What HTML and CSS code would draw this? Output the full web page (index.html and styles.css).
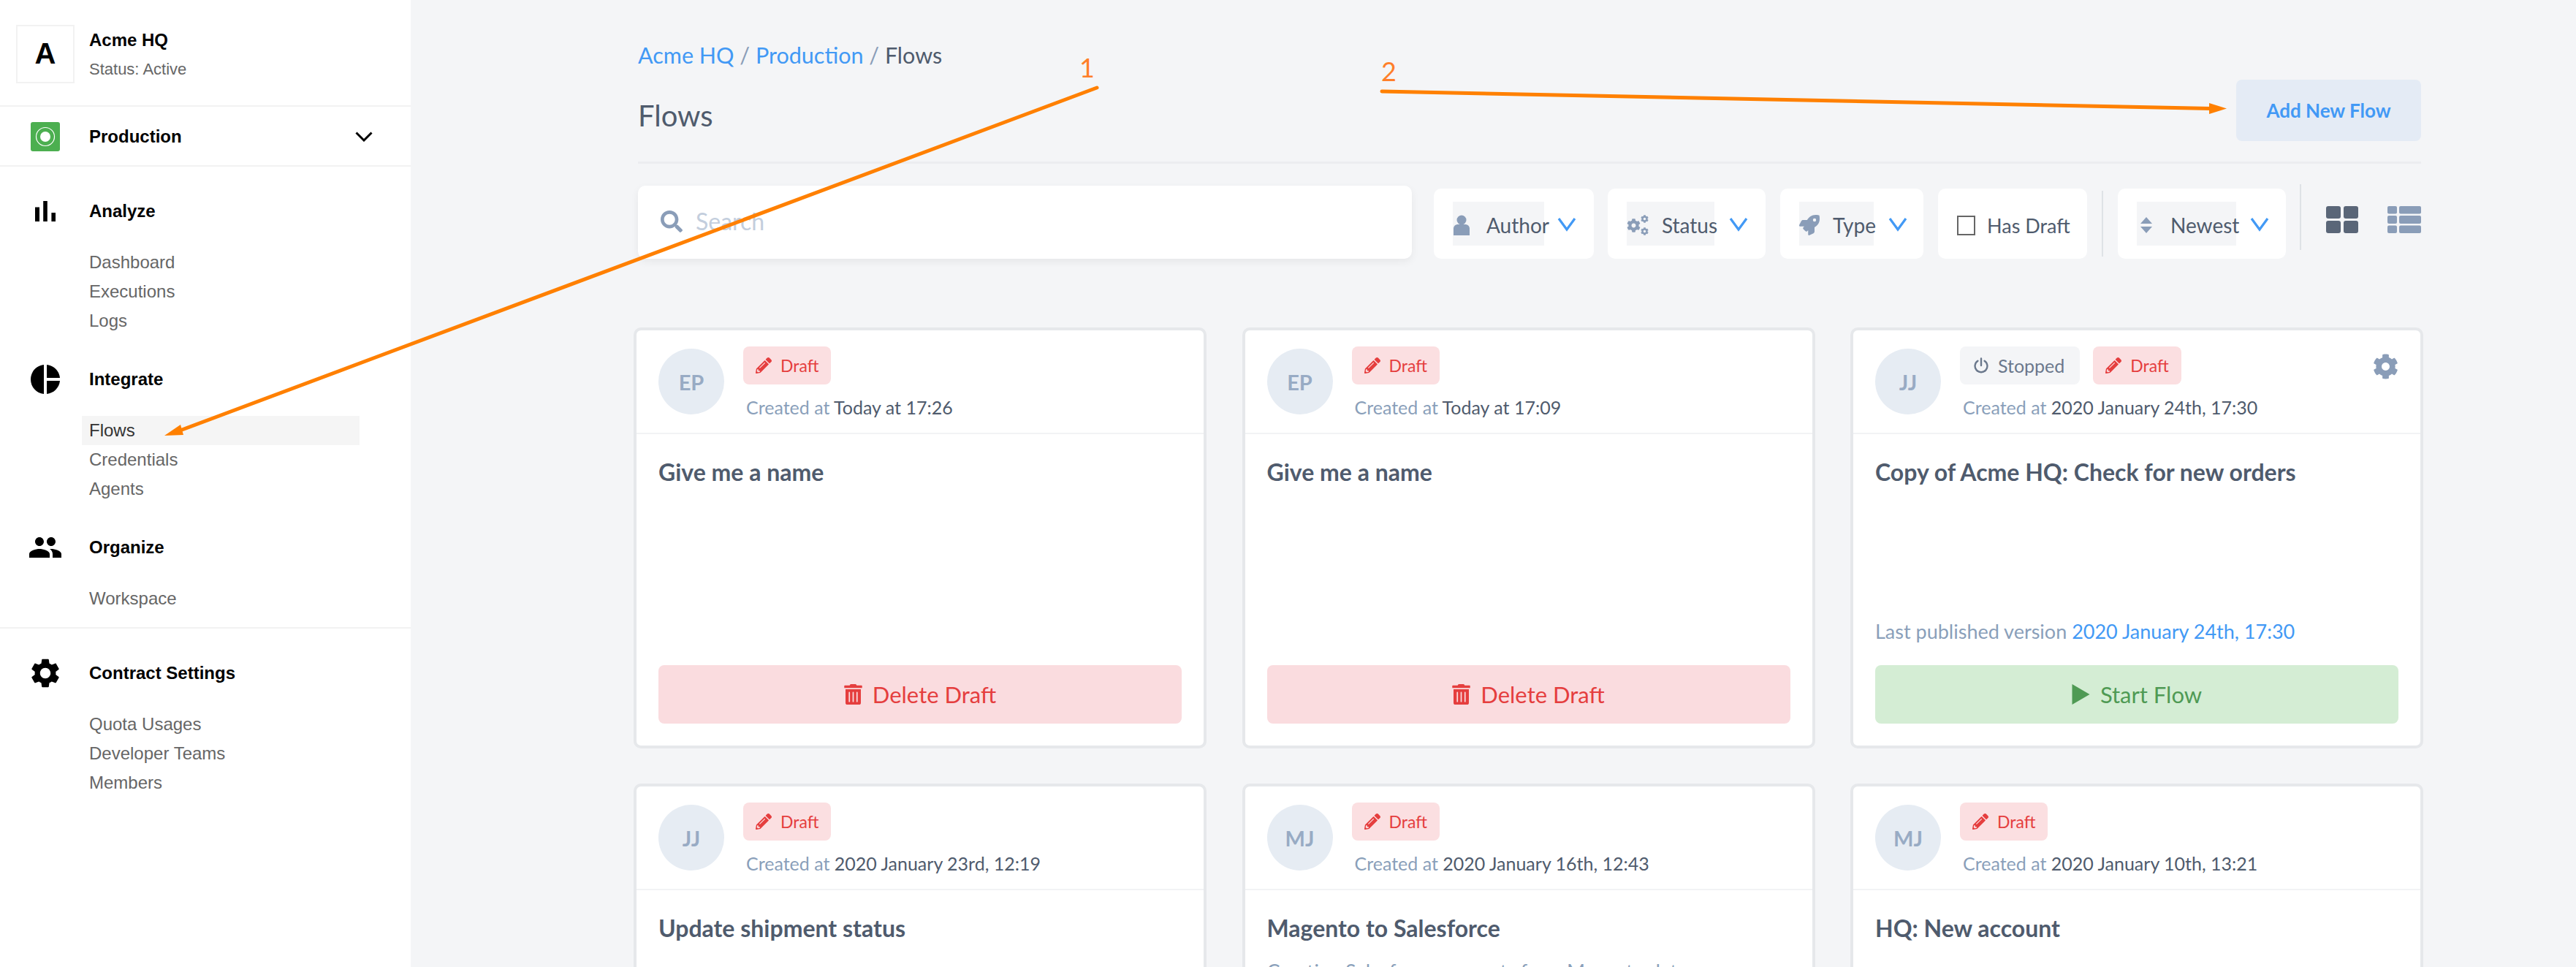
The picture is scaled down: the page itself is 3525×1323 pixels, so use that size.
FILE: index.html
```html
<!DOCTYPE html>
<html>
<head>
    <meta charset="UTF-8">
    <title>Flows</title>
    <link rel="stylesheet" href="styles.css">
</head>
<body>
<svg class="sprite" xmlns="http://www.w3.org/2000/svg">
    <symbol id="i-pencil" viewBox="0 0 512 512"><path d="M497.9 142.1l-46.1 46.1c-4.7 4.7-12.3 4.7-17 0l-111-111c-4.7-4.7-4.7-12.3 0-17l46.1-46.1c18.7-18.7 49.1-18.7 67.9 0l60.1 60.1c18.8 18.7 18.8 49.1 0 67.9zM284.2 99.8L21.6 362.4.4 483.9c-2.9 16.4 11.4 30.6 27.8 27.8l121.5-21.3 262.6-262.6c4.7-4.7 4.7-12.3 0-17l-111-111c-4.8-4.7-12.4-4.7-17.1 0zM124.1 339.9c-5.5-5.5-5.5-14.3 0-19.8l154-154c5.5-5.5 14.3-5.5 19.8 0s5.5 14.3 0 19.8l-154 154c-5.5 5.5-14.3 5.5-19.8 0zM88 424h48v36.3l-64.5 11.3-31.1-31.1L51.7 376H88v48z"/></symbol>
    <symbol id="i-trash" viewBox="0 0 448 512"><path d="M32 464a48 48 0 0 0 48 48h288a48 48 0 0 0 48-48V128H32zm272-256a16 16 0 0 1 32 0v224a16 16 0 0 1-32 0zm-96 0a16 16 0 0 1 32 0v224a16 16 0 0 1-32 0zm-96 0a16 16 0 0 1 32 0v224a16 16 0 0 1-32 0zM432 32H312l-9.4-18.7A24 24 0 0 0 281.1 0H166.8a23.72 23.72 0 0 0-21.4 13.3L136 32H16A16 16 0 0 0 0 48v32a16 16 0 0 0 16 16h416a16 16 0 0 0 16-16V48a16 16 0 0 0-16-16z"/></symbol>
    <symbol id="i-cog" viewBox="0 0 512 512"><path d="M487.4 315.7l-42.6-24.6c4.3-23.2 4.3-47 0-70.2l42.6-24.6c4.9-2.8 7.1-8.6 5.5-14-11.1-35.6-30-67.8-54.7-94.6-3.8-4.1-10-5.1-14.8-2.3L380.8 110c-17.9-15.4-38.5-27.3-60.8-35.1V25.8c0-5.6-3.9-10.5-9.4-11.7-36.7-8.2-74.3-7.8-109.2 0-5.5 1.2-9.4 6.1-9.4 11.7V75c-22.2 7.9-42.8 19.8-60.8 35.1L88.7 85.5c-4.9-2.8-11-1.9-14.8 2.3-24.7 26.7-43.6 58.9-54.7 94.6-1.7 5.4.6 11.2 5.5 14L67.3 221c-4.3 23.2-4.3 47 0 70.2l-42.6 24.6c-4.9 2.8-7.1 8.6-5.5 14 11.1 35.6 30 67.8 54.7 94.6 3.8 4.1 10 5.1 14.8 2.3l42.6-24.6c17.9 15.4 38.5 27.3 60.8 35.1v49.2c0 5.6 3.9 10.5 9.4 11.7 36.7 8.2 74.3 7.8 109.2 0 5.5-1.2 9.4-6.1 9.4-11.7v-49.2c22.2-7.9 42.8-19.8 60.8-35.1l42.6 24.6c4.9 2.8 11 1.9 14.8-2.3 24.7-26.7 43.6-58.9 54.7-94.6 1.5-5.5-.7-11.3-5.6-14.1zM256 336c-44.1 0-80-35.9-80-80s35.9-80 80-80 80 35.9 80 80-35.9 80-80 80z"/></symbol>
    <symbol id="i-power" viewBox="0 0 24 24"><path d="M7 5.2a9.2 9.2 0 1 0 10 0M12 1.5V12" fill="none" stroke="currentColor" stroke-width="2.6" stroke-linecap="round"/></symbol>
    <symbol id="i-play" viewBox="0 0 24 28"><path d="M0 0l24 14L0 28z"/></symbol>
    <symbol id="i-chevron" viewBox="0 0 26 20"><path d="M2 2l11 15L24 2" fill="none" stroke="currentColor" stroke-width="3.2"/></symbol>
</svg>

<aside class="sidebar">
    <div class="org">
        <div class="org-logo">A</div>
        <div class="org-text">
            <div class="org-name">Acme HQ</div>
            <div class="org-status">Status: Active</div>
        </div>
    </div>
    <div class="env">
        <svg class="env-icon" viewBox="0 0 40 40"><rect width="40" height="40" rx="3" fill="#4caf50"/><circle cx="20" cy="20" r="12.5" fill="none" stroke="#fff" stroke-width="1.2"/><circle cx="20" cy="20" r="7" fill="#fff"/></svg>
        <span class="env-name">Production</span>
        <svg class="env-caret" viewBox="0 0 24 14"><path d="M1.5 1.5L12 12 22.5 1.5" fill="none" stroke="#000" stroke-width="3"/></svg>
    </div>
    <nav class="nav">
        <div class="nav-group">
            <div class="nav-head">
                <svg class="nav-icon" viewBox="0 0 24 24"><path d="M5 9.2h3V19H5zM10.6 5h2.8v14h-2.8zm5.6 8H19v6h-2.8z"/></svg>
                Analyze
            </div>
            <a class="nav-item">Dashboard</a>
            <a class="nav-item">Executions</a>
            <a class="nav-item">Logs</a>
        </div>
        <div class="nav-group">
            <div class="nav-head">
                <svg class="nav-icon" viewBox="0 0 24 24"><path d="M11 2v20c-5.07-.5-9-4.79-9-10s3.93-9.5 9-10zm2.03 0v8.99H22c-.47-4.74-4.24-8.52-8.97-8.99zm0 11.01V22c4.74-.47 8.5-4.25 8.97-8.99h-8.97z"/></svg>
                Integrate
            </div>
            <a class="nav-item active">Flows</a>
            <a class="nav-item">Credentials</a>
            <a class="nav-item">Agents</a>
        </div>
        <div class="nav-group last">
            <div class="nav-head">
                <svg class="nav-icon" viewBox="0 0 24 24"><path d="M16 11c1.66 0 2.99-1.34 2.99-3S17.66 5 16 5c-1.66 0-3 1.34-3 3s1.34 3 3 3zm-8 0c1.66 0 2.99-1.34 2.99-3S9.66 5 8 5C6.34 5 5 6.34 5 8s1.34 3 3 3zm0 2c-2.33 0-7 1.17-7 3.5V19h14v-2.5c0-2.33-4.67-3.5-7-3.5zm8 0c-.29 0-.62.02-.97.05 1.16.84 1.97 1.97 1.97 3.45V19h6v-2.5c0-2.33-4.67-3.5-7-3.5z"/></svg>
                Organize
            </div>
            <a class="nav-item">Workspace</a>
        </div>
    </nav>
    <nav class="nav">
        <div class="nav-group last">
            <div class="nav-head">
                <svg class="nav-icon" viewBox="0 0 24 24"><path d="M19.14 12.94c.04-.3.06-.61.06-.94 0-.32-.02-.64-.07-.94l2.03-1.58c.18-.14.23-.41.12-.61l-1.92-3.32c-.12-.22-.37-.29-.59-.22l-2.39.96c-.5-.38-1.03-.7-1.62-.94l-.36-2.54c-.04-.24-.24-.41-.48-.41h-3.84c-.24 0-.43.17-.47.41l-.36 2.54c-.59.24-1.13.57-1.62.94l-2.39-.96c-.22-.08-.47 0-.59.22L2.74 8.87c-.12.21-.08.47.12.61l2.03 1.58c-.05.3-.09.63-.09.94s.02.64.07.94l-2.03 1.58c-.18.14-.23.41-.12.61l1.92 3.32c.12.22.37.29.59.22l2.39-.96c.5.38 1.03.7 1.62.94l.36 2.54c.05.24.24.41.48.41h3.84c.24 0 .44-.17.47-.41l.36-2.54c.59-.24 1.13-.56 1.62-.94l2.39.96c.22.08.47 0 .59-.22l1.92-3.32c.12-.22.07-.47-.12-.61l-2.01-1.58zM12 15.6c-1.98 0-3.6-1.62-3.6-3.6s1.62-3.6 3.6-3.6 3.6 1.62 3.6 3.6-1.62 3.6-3.6 3.6z"/></svg>
                Contract Settings
            </div>
            <a class="nav-item">Quota Usages</a>
            <a class="nav-item">Developer Teams</a>
            <a class="nav-item">Members</a>
        </div>
    </nav>
</aside>

<main class="main">
    <header class="page-head">
        <div>
            <div class="crumbs"><a>Acme HQ</a> <i>/</i> <a>Production</a> <i>/</i> Flows</div>
            <h1>Flows</h1>
        </div>
        <button class="add-btn">Add New Flow</button>
    </header>

    <div class="toolbar">
        <div class="search">
            <svg class="search-icon" viewBox="0 0 512 512"><path d="M505 442.7L405.3 343c-4.5-4.5-10.6-7-17-7H372c27.6-35.3 44-79.7 44-128C416 93.1 322.9 0 208 0S0 93.1 0 208s93.1 208 208 208c48.3 0 92.7-16.4 128-44v16.3c0 6.4 2.5 12.5 7 17l99.7 99.7c9.4 9.4 24.6 9.4 33.9 0l28.3-28.3c9.4-9.4 9.4-24.6.1-34zM208 336c-70.7 0-128-57.2-128-128 0-70.7 57.2-128 128-128 70.7 0 128 57.2 128 128 0 70.7-57.2 128-128 128z"/></svg>
            <span>Search</span>
        </div>
        <div class="filter f-author">
            <div class="filter-label">
                <svg class="filter-icon" viewBox="0 0 24 28"><circle cx="12" cy="7" r="6.5"/><path d="M1 28V19c0-4 3-6 6-6h10c3 0 6 2 6 6v9c0 0-22 0-22 0z"/></svg>
                Author
            </div>
            <svg class="chevron"><use href="#i-chevron"/></svg>
        </div>
        <div class="filter f-status">
            <div class="filter-label">
                <svg class="filter-icon" viewBox="0 0 30 28"><use href="#i-cog" x="0" y="5" width="19" height="19"/><use href="#i-cog" x="19" y="0" width="11" height="11"/><use href="#i-cog" x="19" y="17" width="11" height="11"/></svg>
                Status
            </div>
            <svg class="chevron"><use href="#i-chevron"/></svg>
        </div>
        <div class="filter f-type">
            <div class="filter-label">
                <svg class="filter-icon" viewBox="0 0 512 512"><path d="M505.12 19.09c-1.19-5.53-6.66-11-12.21-12.18C460.72 0 435.51 0 410.41 0 307.18 0 245.27 55.2 199.05 128H94.84c-16.35.02-35.56 11.88-42.89 26.48L2.52 253.3A28.4 28.4 0 0 0 0 264a24 24 0 0 0 24 24h103.81l-22.47 22.47c-11.37 11.36-13 32.26 0 45.25l50.9 50.9c11.16 11.19 32.16 13.16 45.28 0l22.48-22.47V488a24 24 0 0 0 24 24 28.56 28.56 0 0 0 10.71-2.52l98.73-49.39c14.63-7.3 26.51-26.5 26.51-42.86V312.8c72.6-46.31 128.03-108.41 128.03-211.1.02-25.2.02-50.4-6.93-82.61zM384.04 168a40 40 0 1 1 40.01-40 40 40 0 0 1-40.01 40z"/></svg>
                Type
            </div>
            <svg class="chevron"><use href="#i-chevron"/></svg>
        </div>
        <label class="filter f-draft">
            <span class="checkbox"></span>
            Has Draft
        </label>
        <div class="tool-sep"></div>
        <div class="filter f-sort">
            <div class="filter-label">
                <svg class="filter-icon" viewBox="0 0 18 22"><path d="M9 0l8 9H1zM9 22l-8-9h16z"/></svg>
                Newest
            </div>
            <svg class="chevron"><use href="#i-chevron"/></svg>
        </div>
        <div class="tool-sep tall"></div>
        <svg class="view-icon grid-view" viewBox="0 0 44 37"><rect width="20" height="17" rx="3"/><rect x="24" width="20" height="17" rx="3"/><rect y="20" width="20" height="17" rx="3"/><rect x="24" y="20" width="20" height="17" rx="3"/></svg>
        <svg class="view-icon list-view" viewBox="0 0 46 37"><rect width="13" height="10.5" rx="2"/><rect x="16" width="30" height="10.5" rx="2"/><rect y="13" width="13" height="11" rx="2"/><rect x="16" y="13" width="30" height="11" rx="2"/><rect y="26.5" width="13" height="10.5" rx="2"/><rect x="16" y="26.5" width="30" height="10.5" rx="2"/></svg>
    </div>

    <section class="cards">
        <article class="card">
            <div class="card-head">
                <div class="avatar">EP</div>
                <div class="card-meta">
                    <div class="badges">
                        <span class="badge draft"><svg><use href="#i-pencil"/></svg>Draft</span>
                    </div>
                    <div class="created">Created at <b>Today at 17:26</b></div>
                </div>
            </div>
            <div class="card-body">
                <h3>Give me a name</h3>
                <button class="card-btn delete"><svg><use href="#i-trash"/></svg>Delete Draft</button>
            </div>
        </article>

        <article class="card">
            <div class="card-head">
                <div class="avatar">EP</div>
                <div class="card-meta">
                    <div class="badges">
                        <span class="badge draft"><svg><use href="#i-pencil"/></svg>Draft</span>
                    </div>
                    <div class="created">Created at <b>Today at 17:09</b></div>
                </div>
            </div>
            <div class="card-body">
                <h3>Give me a name</h3>
                <button class="card-btn delete"><svg><use href="#i-trash"/></svg>Delete Draft</button>
            </div>
        </article>

        <article class="card">
            <div class="card-head">
                <div class="avatar">JJ</div>
                <div class="card-meta">
                    <div class="badges">
                        <span class="badge stopped"><svg><use href="#i-power"/></svg>Stopped</span>
                        <span class="badge draft"><svg><use href="#i-pencil"/></svg>Draft</span>
                    </div>
                    <div class="created">Created at <b>2020 January 24th, 17:30</b></div>
                </div>
                <svg class="card-gear"><use href="#i-cog"/></svg>
            </div>
            <div class="card-body">
                <h3>Copy of Acme HQ: Check for new orders</h3>
                <p class="published">Last published version <a>2020 January 24th, 17:30</a></p>
                <button class="card-btn start"><svg><use href="#i-play"/></svg>Start Flow</button>
            </div>
        </article>

        <article class="card">
            <div class="card-head">
                <div class="avatar">JJ</div>
                <div class="card-meta">
                    <div class="badges">
                        <span class="badge draft"><svg><use href="#i-pencil"/></svg>Draft</span>
                    </div>
                    <div class="created">Created at <b>2020 January 23rd, 12:19</b></div>
                </div>
            </div>
            <div class="card-body">
                <h3>Update shipment status</h3>
            </div>
        </article>

        <article class="card">
            <div class="card-head">
                <div class="avatar">MJ</div>
                <div class="card-meta">
                    <div class="badges">
                        <span class="badge draft"><svg><use href="#i-pencil"/></svg>Draft</span>
                    </div>
                    <div class="created">Created at <b>2020 January 16th, 12:43</b></div>
                </div>
            </div>
            <div class="card-body">
                <h3>Magento to Salesforce</h3>
                <p class="desc">Creating Salesforce accounts from Magento data</p>
            </div>
        </article>

        <article class="card">
            <div class="card-head">
                <div class="avatar">MJ</div>
                <div class="card-meta">
                    <div class="badges">
                        <span class="badge draft"><svg><use href="#i-pencil"/></svg>Draft</span>
                    </div>
                    <div class="created">Created at <b>2020 January 10th, 13:21</b></div>
                </div>
            </div>
            <div class="card-body">
                <h3>HQ: New account</h3>
            </div>
        </article>
    </section>
</main>

<!-- annotations drawn on top of the screenshot -->
<svg class="marks" viewBox="0 0 3525 1323">
    <path d="M1501 120L249 588" stroke="#ff8000" stroke-width="5" stroke-linecap="round" fill="none"/>
    <path d="M225 596l22-15 4 14z" fill="#ff8000"/>
    <path d="M1891 125L3025 148.5" stroke="#ff8000" stroke-width="5" stroke-linecap="round" fill="none"/>
    <path d="M3047 148.5l-24-7.5v15z" fill="#ff8000"/>
</svg>
<span class="mark-num one">1</span>
<span class="mark-num two">2</span>
</body>
</html>
```

FILE: styles.css
```css
* {
    box-sizing: border-box;
}

html, body {
    height: 100%;
    margin: 0;
}

body {
    display: flex;
    overflow: hidden;
    background-color: #f4f5f7;
    font-family: "Lato", "Noto Sans", sans-serif;
    color: #4f5b6d;
}

.sprite {
    display: none;
}

/* sidebar */

.sidebar {
    flex: 0 0 562px;
    background-color: #fff;
    font-family: "Liberation Sans", Arial, sans-serif;
    font-size: 24px;
}

.org {
    display: flex;
    align-items: center;
    gap: 20px;
    height: 146px;
    padding: 3px 22px 0;
    border-bottom: 2px solid #f2f2f2;
}

.org-logo {
    display: flex;
    align-items: center;
    justify-content: center;
    width: 80px;
    height: 80px;
    border: 2px solid #f2f2f2;
    font-size: 40px;
    font-weight: bold;
    color: #000;
}

.org-text {
    padding-top: 2px;
}

.org-name {
    font-weight: bold;
    color: #000;
    line-height: 28px;
}

.org-status {
    margin-top: 12px;
    font-size: 22px;
    line-height: 28px;
    color: #666;
}

.env {
    display: flex;
    align-items: center;
    height: 82px;
    padding: 1px 52px 0 42px;
    border-bottom: 2px solid #f2f2f2;
}

.env-icon {
    width: 40px;
    height: 40px;
    margin-right: 40px;
}

.env-name {
    flex: 1;
    font-weight: bold;
    color: #000;
}

.env-caret {
    width: 24px;
    height: 14px;
}

.nav {
    padding-top: 41px;
    padding-bottom: 19px;
    border-bottom: 2px solid #f2f2f2;
}

.nav:last-child {
    border-bottom: none;
}

.nav-group {
    margin-bottom: 40px;
}

.nav-group.last {
    margin-bottom: 0;
}

.nav-head {
    display: flex;
    align-items: center;
    gap: 36px;
    height: 40px;
    margin-bottom: 30px;
    padding-left: 38px;
    font-weight: bold;
    color: #000;
}

.nav-icon {
    width: 48px;
    height: 48px;
    flex: none;
}

.nav-item {
    display: block;
    width: 380px;
    height: 40px;
    margin-left: 112px;
    padding-left: 10px;
    line-height: 40px;
    color: #666;
}

.nav-item.active {
    background-color: #f5f5f5;
    color: #333;
}

/* main area */

.main {
    flex: 1;
    height: 100vh;
    overflow: hidden;
    padding: 0 212px 0 311px;
}

.page-head {
    display: flex;
    justify-content: space-between;
    height: 224px;
    padding-top: 55px;
    border-bottom: 3px solid #ecedf0;
}

.crumbs {
    font-size: 30.5px;
    line-height: 40px;
}

.crumbs a {
    color: #4299f5;
}

.crumbs i {
    font-style: normal;
    color: #8a9db8;
}

h1 {
    margin: 38px 0 0;
    font-size: 40px;
    font-weight: normal;
    line-height: 50px;
}

.add-btn {
    width: 253px;
    height: 84px;
    margin-top: 54px;
    border: none;
    border-radius: 8px;
    background-color: #e4ebf5;
    color: #4299f5;
    font-family: inherit;
    font-size: 26px;
    font-weight: bold;
}

.toolbar {
    display: flex;
    align-items: flex-end;
    height: 100px;
    margin-top: 30px;
}

.search {
    display: flex;
    flex: none;
    align-items: center;
    gap: 18px;
    width: 1059px;
    height: 100px;
    margin-right: 30px;
    padding: 0 0 3px 31px;
    border-radius: 10px;
    background-color: #fff;
    box-shadow: 0 4px 12px rgba(0, 0, 0, 0.06);
    font-size: 32px;
    color: #c3cedd;
}

.search-icon {
    width: 30px;
    height: 30px;
    fill: #8a9db8;
}

.filter {
    display: flex;
    flex: none;
    align-items: center;
    height: 96px;
    margin-right: 20px;
    padding: 0 26px;
    border-radius: 10px;
    background-color: #fff;
    font-size: 28px;
    color: #4f5b6d;
}

.filter-label {
    display: flex;
    align-items: center;
    gap: 18px;
    height: 60px;
    padding-top: 4px;
    background-color: #f4f5f7;
    white-space: nowrap;
}

.filter-icon {
    flex: none;
    fill: #8a9db8;
}

.chevron {
    flex: none;
    width: 26px;
    height: 20px;
    margin-top: 2px;
    color: #4299f5;
}

.f-author { width: 219px; margin-right: 19px; }
.f-author .filter-label { width: 125px; gap: 22px; margin-right: 18px; }
.f-author .filter-icon { width: 24px; height: 28px; }

.f-status { width: 216px; }
.f-status .filter-label { width: 120px; margin-right: 20px; }
.f-status .filter-icon { width: 30px; height: 28px; }

.f-type { width: 196px; }
.f-type .filter-label { width: 102px; margin-right: 20px; }
.f-type .filter-icon { width: 28px; height: 28px; }

.f-draft { width: 204px; gap: 16px; padding-top: 5px; white-space: nowrap; font-size: 27px; }

.f-sort { width: 230px; margin-right: 19px; }
.f-sort .filter-label { width: 136px; gap: 24px; margin-right: 19px; padding-left: 4px; }
.f-sort .filter-icon { width: 18px; height: 22px; }

.checkbox {
    flex: none;
    width: 25px;
    height: 27px;
    border: 2px solid #666;
}

.tool-sep {
    flex: none;
    width: 2px;
    height: 90px;
    margin: 0 20px 3px 0;
    background-color: #dfe2e6;
}

.tool-sep.tall {
    margin: 0 34px 12px 0;
}

.view-icon {
    flex: none;
    align-self: flex-start;
    height: 37px;
    margin-top: 28px;
}

.grid-view {
    width: 44px;
    margin-right: 40px;
    fill: #5a6678;
}

.list-view {
    width: 46px;
    fill: #8a9db8;
}

/* cards */

.cards {
    display: grid;
    grid-template-columns: repeat(3, 784px);
    grid-auto-rows: 576px;
    gap: 48px 48.5px;
    margin: 94px 0 0 -6px;
}

.card {
    display: flex;
    flex-direction: column;
    border: 4px solid #e6e8eb;
    border-radius: 10px;
    background-color: #fff;
}

.card-head {
    display: flex;
    flex: 0 0 142px;
    padding: 22px 30px 0;
    border-bottom: 2px solid #f2f3f5;
}

.avatar {
    display: flex;
    flex: none;
    align-items: center;
    justify-content: center;
    width: 90px;
    height: 90px;
    margin-top: 3px;
    margin-right: 26px;
    border-radius: 50%;
    background-color: #e6ecf3;
    font-size: 29px;
    font-weight: bold;
    color: #98abc4;
}

.card-meta {
    flex: 1;
}

.badges {
    display: flex;
    gap: 18px;
}

.badge {
    display: flex;
    align-items: center;
    gap: 12px;
    height: 52px;
    padding: 0 17px;
    border-radius: 8px;
    font-size: 23px;
}

.badge svg {
    width: 22px;
    height: 22px;
    fill: currentColor;
}

.badge.draft {
    background-color: #fbdfe1;
    color: #e53e3e;
}

.badge.stopped {
    padding: 0 21px 0 18px;
    background-color: #f4f5f7;
    color: #6b788c;
    font-size: 25px;
}

.created {
    margin-top: 14px;
    padding-left: 4px;
    font-size: 25px;
    line-height: 34px;
    color: #8a9fba;
}

.created b {
    font-weight: normal;
    color: #4f5b6d;
}

.card-gear {
    flex: none;
    width: 35px;
    height: 35px;
    margin-top: 10px;
    fill: #8a9db8;
}

.card-body {
    display: flex;
    flex: 1;
    flex-direction: column;
    padding: 32px 30px 30px;
}

h3 {
    margin: 0;
    font-size: 32px;
    line-height: 40px;
}

.published {
    margin: auto 0 28px;
    font-size: 27px;
    line-height: 36px;
    color: #8a9fba;
}

.published a {
    color: #4299f5;
}

.desc {
    margin: 21px 0 0;
    font-size: 27px;
    line-height: 36px;
    color: #8a9fba;
}

.card-btn {
    display: flex;
    align-items: center;
    justify-content: center;
    gap: 14px;
    height: 80px;
    margin-top: auto;
    border: none;
    border-radius: 8px;
    font-family: inherit;
    font-size: 31px;
}

.published + .card-btn {
    margin-top: 0;
}

.card-btn svg {
    width: 25px;
    height: 28px;
    fill: currentColor;
}

.card-btn.delete {
    background-color: #fadcdf;
    color: #e53e3e;
}

.card-btn.start {
    background-color: #d4edd4;
    color: #4f9a54;
}

/* annotations */

.marks {
    position: absolute;
    top: 0;
    left: 0;
    width: 3525px;
    height: 1323px;
    pointer-events: none;
}

.mark-num {
    position: absolute;
    font-size: 36px;
    line-height: 40px;
    color: #ff7f2a;
}

.mark-num.one {
    top: 72px;
    left: 1477px;
}

.mark-num.two {
    top: 77px;
    left: 1890px;
}
```
